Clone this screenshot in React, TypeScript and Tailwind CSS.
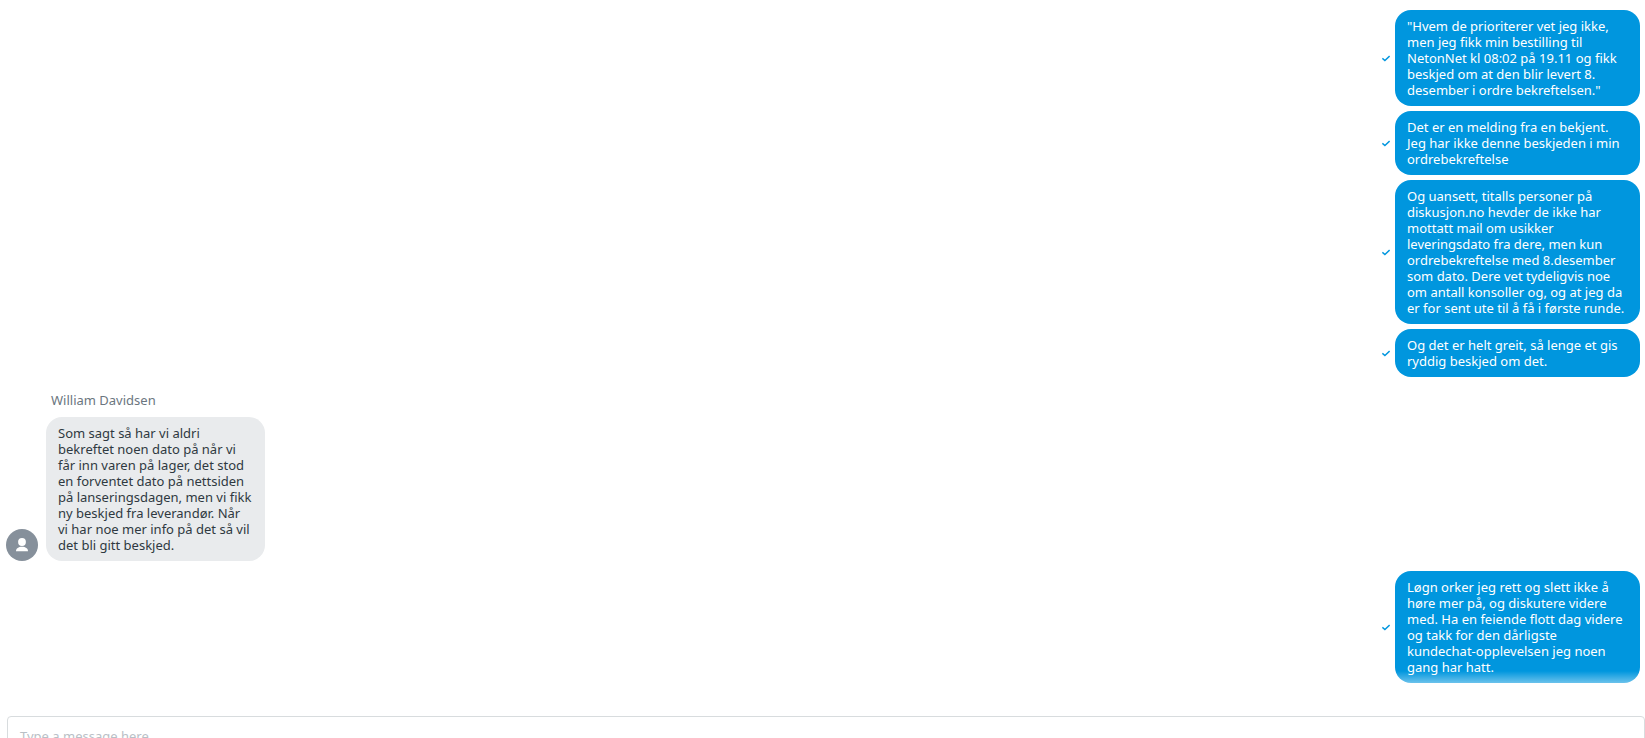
const outgoing = [
  `"Hvem de prioriterer vet jeg ikke,
men jeg fikk min bestilling til
NetonNet kl 08:02 på 19.11 og fikk
beskjed om at den blir levert 8.
desember i ordre bekreftelsen."`,
  `Det er en melding fra en bekjent.
Jeg har ikke denne beskjeden i min
ordrebekreftelse`,
  `Og uansett, titalls personer på
diskusjon.no hevder de ikke har
mottatt mail om usikker
leveringsdato fra dere, men kun
ordrebekreftelse med 8.desember
som dato. Dere vet tydeligvis noe
om antall konsoller og, og at jeg da
er for sent ute til å få i første runde.`,
  `Og det er helt greit, så lenge et gis
ryddig beskjed om det.`,
];

const reply = `Som sagt så har vi aldri
bekreftet noen dato på når vi
får inn varen på lager, det stod
en forventet dato på nettsiden
på lanseringsdagen, men vi fikk
ny beskjed fra leverandør. Når
vi har noe mer info på det så vil
det bli gitt beskjed.`;

const closing = `Løgn orker jeg rett og slett ikke å
høre mer på, og diskutere videre
med. Ha en feiende flott dag videre
og takk for den dårligste
kundechat-opplevelsen jeg noen
gang har hatt.`;

function Check() {
  return (
    <svg className="h-2 w-2 shrink-0" viewBox="0 0 8 8" fill="none" aria-label="Sendt" role="img">
      <path d="M0.4 4.3 L2.9 6.6 L7.6 2.1" stroke="#0096de" strokeWidth="1.4" />
    </svg>
  );
}

function Sent({ text }: { text: string }) {
  return (
    <li className="flex items-center justify-end gap-[5px]">
      <Check />
      <p className="w-[245px] rounded-2xl bg-[#0096de] px-3 py-2 whitespace-pre text-white">{text}</p>
    </li>
  );
}

function Avatar() {
  return (
    <span className="flex size-8 shrink-0 items-center justify-center rounded-full bg-[#86909b]">
      <svg className="size-4" viewBox="0 0 16 16" fill="white" aria-hidden="true">
        <circle cx="8" cy="5" r="3.9" />
        <path d="M2 14.2 C2 11.6 4.5 9.8 8 9.8 S14 11.6 14 14.2 Z" />
      </svg>
    </span>
  );
}

export default function App() {
  return (
    <div className="flex h-screen flex-col overflow-hidden bg-white font-['Noto_Sans','Open_Sans',sans-serif] text-[13px] leading-4">
      <main className="relative shrink-0 px-[5px] pt-[10px] pb-2">
        <ul className="flex flex-col gap-[5px]">
          {outgoing.map((text) => (
            <Sent key={text} text={text} />
          ))}
        </ul>
        <section className="mt-[15px] mb-[10px] pl-px">
          <h2 className="mb-[9px] pl-[45px] text-[#6b7680]">William Davidsen</h2>
          <div className="flex items-end gap-2">
            <Avatar />
            <p className="w-[219px] rounded-2xl bg-[#e9ebed] px-3 py-2 whitespace-pre text-[#2f3941]">{reply}</p>
          </div>
        </section>
        <ul>
          <Sent text={closing} />
        </ul>
        <div className="pointer-events-none absolute inset-x-0 bottom-0 h-5 bg-linear-to-t from-white/70 to-white/0" />
      </main>
      <form className="mt-[25px] shrink-0 pl-[7px]">
        <textarea
          aria-label="Type a message here"
          placeholder="Type a message here..."
          className="block h-14 w-full resize-none rounded border border-[#d8dcde] px-3 py-[11px] placeholder:text-[#b9c0c6] focus:outline-none"
        />
      </form>
    </div>
  );
}
